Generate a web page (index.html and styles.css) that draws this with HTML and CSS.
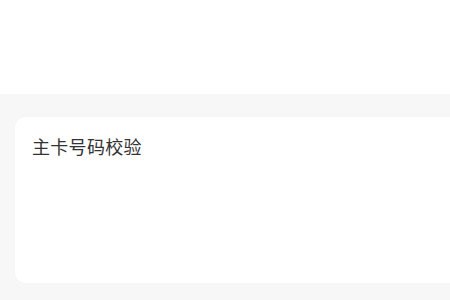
FILE: index.html
```html
<!DOCTYPE html>
<html lang="zh-CN">
<head>
<meta charset="utf-8">
<link rel="stylesheet" href="styles.css">
</head>
<body>
<div class="top"></div>
<main class="content">
  <section class="card">
    <h2 class="title">主卡号码校验</h2>
  </section>
</main>
</body>
</html>
```
FILE: styles.css
```css
html, body {
  margin: 0;
  padding: 0;
  background: #f7f7f7;
  font-family: "Noto Sans CJK SC", "Noto Sans", sans-serif;
  overflow: hidden;
}
.top {
  height: 94px;
  background: #ffffff;
}
.content {
  padding: 23px 0 0 15px;
}
.card {
  background: #ffffff;
  border-radius: 10px;
  height: 166px;
  width: 455px;
  box-sizing: border-box;
  padding: 16px 17px;
  box-shadow: 0 0 2px rgba(0,0,0,0.04);
}
.title {
  margin: 0;
  font-size: 18px;
  line-height: 26px;
  font-weight: 400;
  color: #333333;
  letter-spacing: 0.3px;
}
```
